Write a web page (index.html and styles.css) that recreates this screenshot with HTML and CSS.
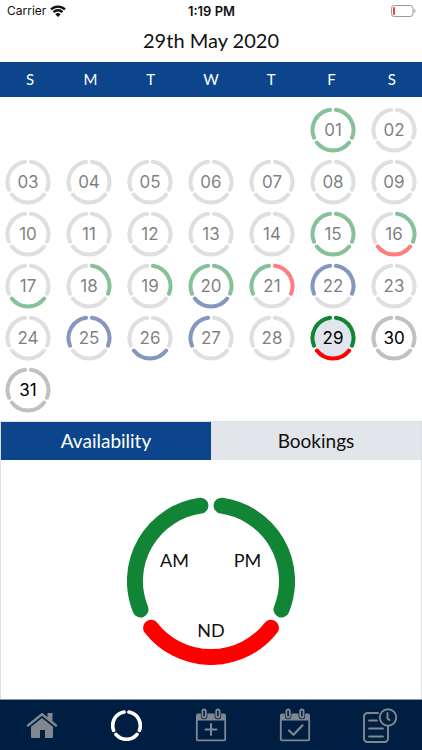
FILE: index.html
```html
<!DOCTYPE html>
<html lang="en">
<head>
<meta charset="utf-8">
<meta name="viewport" content="width=device-width, initial-scale=1">
<title>Availability</title>
<link rel="stylesheet" href="styles.css">
</head>
<body>
<div class="app">
  <header>
    <div class="status">
      <span class="carrier">Carrier
        <svg class="wifi" viewBox="0 0 16 12" width="16" height="12" aria-hidden="true"><path d="M1 4.4a10 10 0 0 1 14 0M3.5 7.1a6.4 6.4 0 0 1 9 0" fill="none" stroke="currentColor" stroke-width="2.3"/><path d="M8 12 5.3 9.200a3.900 3.900 0 0 1 5.400 0z" fill="currentColor"/></svg>
      </span>
      <span class="clock">1:19 PM</span>
      <svg class="battery" viewBox="0 0 25 12" width="25" height="12" aria-hidden="true"><rect x=".5" y=".5" width="21.500" height="11" rx="2.800" fill="none" stroke="#9a9a9a"/><rect x="2" y="2" width="2" height="8" rx="1" fill="#e8453c"/><path d="M23.300 4v4c1.600-.6 1.600-3.400 0-4z" fill="#9a9a9a"/></svg>
    </div>
    <h1>29th May 2020</h1>
  </header>

  <div class="weekdays"><span>S</span><span>M</span><span>T</span><span>W</span><span>T</span><span>F</span><span>S</span></div>
  <div class="days" id="days"></div>

  <main class="details">
    <div class="tabs" role="tablist">
      <button class="tab active" role="tab" aria-selected="true">Availability</button>
      <button class="tab" role="tab" aria-selected="false">Bookings</button>
    </div>
    <div class="panel" role="tabpanel">
      <div class="dial">
        <svg class="dial-ring" viewBox="-84 -84 168 168" aria-hidden="true">
          <path class="green" d="M-70.500 28.500A76 76 0 0 1-10.600-75.300"/>
          <path class="green" d="M10.600-75.300A76 76 0 0 1 70.500 28.500"/>
          <path class="red" d="M59.900 46.800A76 76 0 0 1-59.900 46.800"/>
        </svg>
        <div class="dial-labels"><span>AM</span><span>PM</span><span class="nd">ND</span></div>
      </div>
    </div>
  </main>

  <nav class="nav">
    <a href="#home" aria-label="Home"><svg viewBox="0 0 32 26" width="32" height="26"><path d="M2 13.500 16 2.200 30 13.500" fill="none" stroke="currentColor" stroke-width="2.400" stroke-linecap="round" stroke-linejoin="round"/><path d="M21.500 1h5v9l-5-4z" fill="currentColor"/><path d="M5 14.800 16 6l11 8.800V25a1 1 0 0 1-1 1h-7v-8h-5v8H6a1 1 0 0 1-1-1z" fill="currentColor"/></svg></a>
    <a class="current" href="#availability" aria-label="Availability"><svg viewBox="-84 -84 168 168" width="31" height="31"><g fill="none" stroke="currentColor" stroke-width="20" stroke-linecap="round"><path d="M-70 26A74 74 0 0 1-13-73"/><path d="M13-73A74 74 0 0 1 70 26"/><path d="M57 48A74 74 0 0 1-57 48"/></g></svg></a>
    <a href="#add" aria-label="Add booking"><svg viewBox="0 0 32 34" width="32" height="34"><path d="M1.800 12v19.200c0 .8.500 1.200 1.200 1.200h26c.7 0 1.200-.4 1.200-1.200V12" fill="none" stroke="currentColor" stroke-width="1.800"/><path d="M1 12.500V7.500Q1 5.500 3 5.500h2.800V8a3.300 3.300 0 0 0 6.600 0V5.500h7.200V8a3.300 3.300 0 0 0 6.600 0V5.500H29q2 0 2 2v5z" fill="currentColor"/><rect x="7.400" y="1.500" width="3.400" height="8" rx="1.700" fill="none" stroke="currentColor" stroke-width="1.800"/><rect x="21.200" y="1.500" width="3.400" height="8" rx="1.700" fill="none" stroke="currentColor" stroke-width="1.800"/><path d="M10.500 21.500h11M16 16v11" fill="none" stroke="currentColor" stroke-width="2" stroke-linecap="round"/></svg></a>
    <a href="#confirmed" aria-label="Confirmed bookings"><svg viewBox="0 0 32 34" width="32" height="34"><path d="M1.800 12v19.200c0 .8.500 1.200 1.200 1.200h26c.7 0 1.200-.4 1.200-1.200V12" fill="none" stroke="currentColor" stroke-width="1.800"/><path d="M1 12.500V7.500Q1 5.500 3 5.500h2.800V8a3.300 3.300 0 0 0 6.600 0V5.500h7.200V8a3.300 3.300 0 0 0 6.600 0V5.500H29q2 0 2 2v5z" fill="currentColor"/><rect x="7.400" y="1.500" width="3.400" height="8" rx="1.700" fill="none" stroke="currentColor" stroke-width="1.800"/><rect x="21.200" y="1.500" width="3.400" height="8" rx="1.700" fill="none" stroke="currentColor" stroke-width="1.800"/><path d="m10 22.500 4.500 4.300 9-9.500" fill="none" stroke="currentColor" stroke-width="2.200" stroke-linecap="round" stroke-linejoin="round"/></svg></a>
    <a href="#timesheets" aria-label="Timesheets"><svg viewBox="0 0 34 35" width="34" height="35"><g fill="none" stroke="currentColor" stroke-width="1.900" stroke-linecap="round"><path d="M15 5H4.500A3.500 3.500 0 0 0 1 8.500v22A3.500 3.500 0 0 0 4.500 34h17a3.500 3.500 0 0 0 3.500-3.500v-12"/><path d="M6 12.500h8M6 20.500h14M6 28.500h14"/><circle cx="25" cy="9.500" r="8.200"/><path d="M24.500 5v5.500l2 1.500"/></g></svg></a>
  </nav>
</div>
<script src="script.js"></script>
</body>
</html>
```

FILE: styles.css
```css
* { box-sizing: border-box; }

body {
  margin: 0;
  background: #fff;
  color: #111;
  font-family: Lato, "Liberation Sans", sans-serif;
}

.app {
  display: flex;
  flex-direction: column;
  min-height: 100vh;
}

.status {
  display: grid;
  grid-template-columns: 1fr auto 1fr;
  align-items: center;
  height: 22px;
  padding: 0 6px 0 7px;
  font: 12px/22px Inter, sans-serif;
}

.carrier {
  display: flex;
  align-items: center;
  gap: 4px;
}

.clock {
  font-size: 13px;
  font-weight: 600;
}

.battery { justify-self: end; }

h1 {
  margin: 0;
  padding-bottom: 4px;
  font-size: 20px;
  font-weight: 400;
  line-height: 36px;
  text-align: center;
}

.weekdays {
  display: grid;
  grid-template-columns: repeat(7, 1fr);
  background: #0c458c;
  color: #fff;
  font-size: 15px;
  line-height: 35px;
  text-align: center;
}

.days {
  display: grid;
  grid-template-columns: repeat(7, 46px);
  justify-content: space-between;
  row-gap: 6px;
  padding: 10px 5px 8px;
}

.day {
  display: grid;
  place-items: center;
  height: 46px;
  padding: 0;
  border: 0;
  background: none;
  color: #000;
  font: 17px/20px Inter, sans-serif;
}

.day:first-child { grid-column-start: 6; }

.day > * { grid-area: 1 / 1; }

.day.past { opacity: .5; }

.ring {
  width: 46px;
  height: 46px;
  fill: none;
  stroke: #c1c1c1;
  stroke-width: 4;
  stroke-linecap: round;
}

.ring circle {
  fill: none;
  stroke: none;
}

.selected .ring circle { fill: #e1e5ee; }

.green { stroke: #128435; }
.red { stroke: #fe0000; }
.blue { stroke: #0e3080; }

.details {
  display: flex;
  flex: 1;
  flex-direction: column;
  border: 1px solid #dcdee3;
  border-bottom: 0;
}

.tabs {
  display: grid;
  grid-template-columns: 1fr 1fr;
}

.tab {
  padding: 0;
  border: 0;
  background: #e2e5ea;
  color: #111;
  font: 19px/38px Lato, sans-serif;
}

.tab.active {
  background: #0c458c;
  color: #fff;
}

.panel {
  display: grid;
  flex: 1;
  place-items: center;
  padding-top: 2px;
}

.dial { display: grid; }

.dial > * { grid-area: 1 / 1; }

.dial-ring {
  width: 168px;
  height: 168px;
  fill: none;
  stroke-width: 16;
  stroke-linecap: round;
}

.dial-labels {
  display: grid;
  grid-template-columns: 1fr 1fr;
  align-content: center;
  justify-self: center;
  width: 146px;
  row-gap: 46px;
  padding-top: 28px;
  font-size: 18px;
  line-height: 24px;
  text-align: center;
}

.nd { grid-column: 1 / 3; }

.nav {
  display: grid;
  grid-template-columns: repeat(5, 1fr);
  height: 51px;
  border-top: 1px solid #8a94a3;
  background: #001e42;
}

.nav a {
  display: grid;
  place-items: center;
  color: #808791;
}

.nav a.current { color: #fff; }
```

FILE: script.js
```js
const TODAY = 29;

// Colours of the AM, PM and ND segments; days not listed are unset.
const segments = {
  1: ["green", "green", "green"],
  15: ["green", "green", "green"],
  16: ["", "green", "red"],
  17: ["", "", "green"],
  18: ["", "green", ""],
  19: ["", "green", ""],
  20: ["green", "green", "blue"],
  21: ["green", "red", ""],
  22: ["blue", "blue", ""],
  25: ["blue", "blue", ""],
  26: ["", "", "blue"],
  27: ["blue", "", ""],
  29: ["green", "green", "red"]
};

const arcs = [
  "M-19 7.700A20.500 20.500 0 0 1-2.900-20.300",
  "M2.900-20.300A20.500 20.500 0 0 1 19 7.700",
  "M16.200 12.600A20.500 20.500 0 0 1-16.200 12.600"
];

let html = "";
for (let day = 1; day <= 31; day++) {
  const colours = segments[day] || ["", "", ""];
  const state = day < TODAY ? "past" : day === TODAY ? "selected" : "";
  const paths = arcs.map((d, i) => `<path class="${colours[i]}" d="${d}"/>`).join("");
  html += `<button class="day ${state}"><svg class="ring" viewBox="-23 -23 46 46" aria-hidden="true"><circle r="19"/>${paths}</svg><span>${String(day).padStart(2, "0")}</span></button>`;
}
document.getElementById("days").innerHTML = html;
```
